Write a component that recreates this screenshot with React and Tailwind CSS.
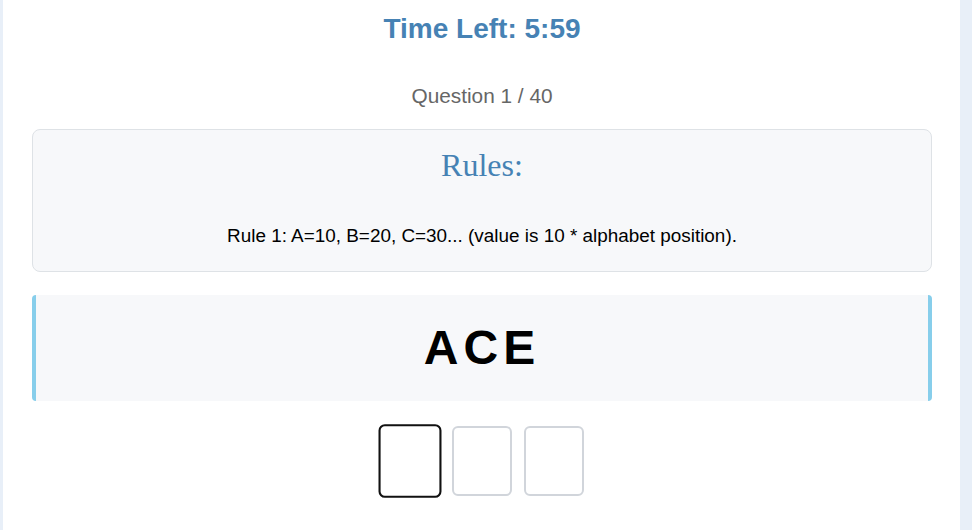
import { useState } from 'react'

const RULES = ['Rule 1: A=10, B=20, C=30... (value is 10 * alphabet position).']

function AnswerBox({ focused }) {
  return (
    <div
      className={`w-[60px] h-[70px] rounded-[6px] border-2 bg-white ${
        focused ? 'border-[#111] scale-105' : 'border-[#d1d5db]'
      }`}
    />
  )
}

export default function App() {
  const [active] = useState(0)

  return (
    <div className="min-h-screen bg-[#e8eff8] flex font-['Liberation_Sans',Arial,sans-serif]">
      <div className="ml-[3px] w-[957px] min-h-[530px] bg-white pl-[29px] pr-[28px]">
        {/* Timer */}
        <h1 className="pt-[12px] text-center text-[28px] leading-[34px] font-bold text-[#4682b4]">
          Time Left: 5:59
        </h1>

        {/* Progress */}
        <p className="mt-[38px] text-center text-[20.8px] leading-[24px] text-[#666]">
          Question 1 / 40
        </p>

        {/* Rules */}
        <div className="mt-[21px] h-[143px] rounded-[8px] border border-[#dee2e6] bg-[#f7f8fa] pt-[17px]">
          <h2 className="text-center font-['Liberation_Serif',serif] text-[32px] leading-[37px] text-[#4682b4]">
            Rules:
          </h2>
          {RULES.map((r) => (
            <p key={r} className="mt-[41px] text-center text-[18.9px] leading-[22px] text-black">
              {r}
            </p>
          ))}
        </div>

        {/* Word */}
        <div className="mt-[23px] h-[106px] rounded-[4px] border-x-4 border-[#87ceeb] bg-[#f7f8fa] flex items-center justify-center">
          <span className="text-[48px] leading-none font-bold tracking-[5px] text-black">ACE</span>
        </div>

        {/* Answer */}
        <div className="mt-[25px] flex justify-center gap-[12px]">
          {[0, 1, 2].map((i) => (
            <AnswerBox key={i} focused={i === active} />
          ))}
        </div>
      </div>
    </div>
  )
}
